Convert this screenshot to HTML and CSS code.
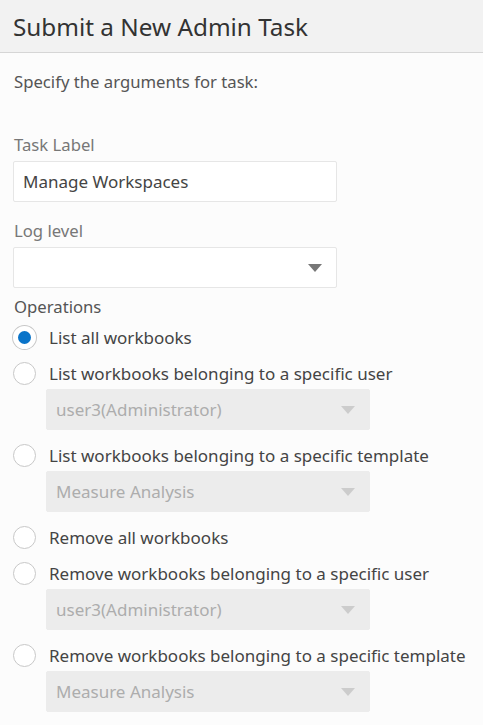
FILE: index.html
```html
<!DOCTYPE html>
<html lang="en">
<head>
  <meta charset="UTF-8" />
  <title>Submit a New Admin Task</title>
  <link rel="stylesheet" href="styles.css">
</head>
<body>
  <div class="dialog">
    <!-- Title bar -->
    <div class="header">
      <h1>Submit a New Admin Task</h1>
    </div>

    <div class="content">
      <p class="intro">Specify the arguments for task:</p>

      <div class="field">
        <label class="field-label">Task Label</label>
        <div class="text-input">Manage Workspaces</div>
      </div>

      <div class="field">
        <label class="field-label">Log level</label>
        <div class="select"><span></span><i class="arrow"></i></div>
      </div>

      <div class="operations">
        <div class="field-label">Operations</div>

        <div class="radio checked"><span class="dot"></span>List all workbooks</div>

        <div class="radio"><span class="dot"></span>List workbooks belonging to a specific user</div>
        <div class="select disabled"><span>user3(Administrator)</span><i class="arrow"></i></div>

        <div class="radio"><span class="dot"></span>List workbooks belonging to a specific template</div>
        <div class="select disabled"><span>Measure Analysis</span><i class="arrow"></i></div>

        <div class="radio"><span class="dot"></span>Remove all workbooks</div>

        <div class="radio"><span class="dot"></span>Remove workbooks belonging to a specific user</div>
        <div class="select disabled"><span>user3(Administrator)</span><i class="arrow"></i></div>

        <div class="radio"><span class="dot"></span>Remove workbooks belonging to a specific template</div>
        <div class="select disabled"><span>Measure Analysis</span><i class="arrow"></i></div>
      </div>
    </div>
  </div>
</body>
</html>
```

FILE: styles.css
```css
body {
  margin: 0;
  padding: 0;
  font-family: "Noto Sans", sans-serif;
  background-color: #fcfcfc;
  color: #333;
}

.header {
  background-color: #f2f2f2;
  border-bottom: 1px solid #d6d6d6;
  height: 52px;
  padding: 0 13px;
  display: flex;
  align-items: center;
}

.header h1 {
  margin: 0;
  font-size: 24.3px;
  font-weight: normal;
  color: #333;
}

.content {
  padding: 16px 13px;
}

.intro {
  margin: 0 0 0 1px;
  font-size: 16.7px;
  color: #555;
  line-height: 26px;
}

.field {
  margin-top: 39px;
}

.field + .field {
  margin-top: 18px;
}

.field-label {
  display: block;
  font-size: 16.7px;
  color: #777;
  line-height: 22px;
  margin-left: 1px;
  margin-bottom: 5px;
}

.text-input,
.select {
  box-sizing: border-box;
  width: 324px;
  height: 41px;
  background-color: #fff;
  border: 1px solid #e6e6e6;
  border-radius: 2px;
  padding: 0 9px;
  display: flex;
  align-items: center;
  font-size: 17px;
  color: #444;
}

.select span {
  flex: 1;
}

.arrow {
  width: 0;
  height: 0;
  border-left: 7px solid transparent;
  border-right: 7px solid transparent;
  border-top: 8px solid #777;
  margin-right: 5px;
}

.operations {
  margin-top: 8px;
}

.operations .field-label {
  color: #555;
  margin-bottom: 0;
}

.radio {
  display: flex;
  align-items: center;
  height: 34px;
  margin-top: 2px;
  font-size: 17px;
  color: #444;
}

.dot {
  box-sizing: border-box;
  width: 23px;
  height: 23px;
  border: 1px solid #c8c8c8;
  border-radius: 50%;
  background-color: #fff;
  margin-right: 13px;
}

.radio.checked .dot {
  border: 5px solid #fff;
  background-color: #0a74c9;
  box-shadow: 0 0 0 1px #c8c8c8;
}

/* bottom margin collapses with the next radio's top margin */
.select.disabled {
  margin: -1px 0 8px 33px;
  background-color: #ececec;
  border-color: #ececec;
  color: #adadad;
}

.select.disabled .arrow {
  border-top-color: #ccc;
}
```
